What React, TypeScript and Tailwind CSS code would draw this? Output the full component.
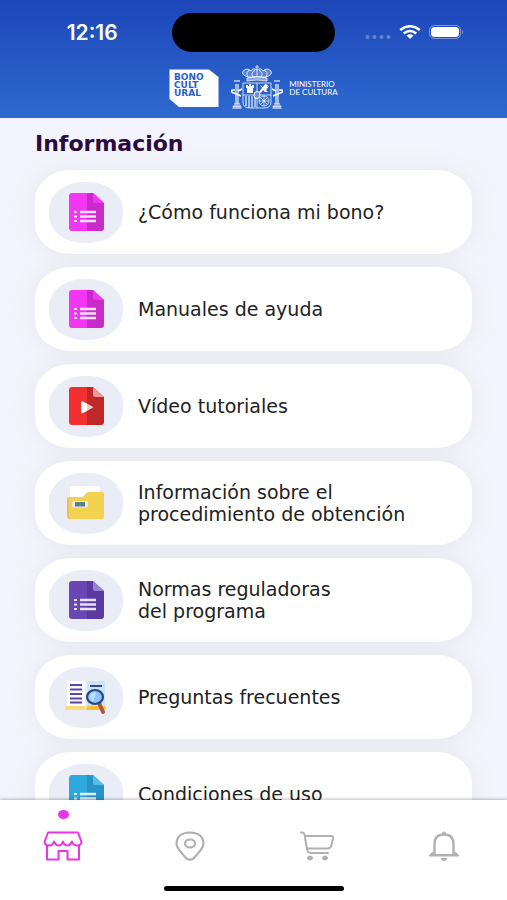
import type { ReactNode } from 'react';
import { clsx } from 'clsx';

interface DocColors {
    light: string;
    dark: string;
    fold: string;
}

const DocIcon = ({ colors, video }: { colors: DocColors; video?: boolean }) => (
    <svg viewBox="-1 0 36 38" className="h-[38px] w-9" aria-hidden="true">
        <path d="M3 0H18V38H3Q0 38 0 35V3Q0 0 3 0Z" fill={colors.light} />
        <path d="M18 0H24L35 10V35Q35 38 32 38H18Z" fill={colors.dark} />
        <path d="M24 0L35 10H26Q24 10 24 8Z" fill={colors.fold} />
        {video ? (
            <>
                <path d="M12 16Q12 13.500 14 14.500L18 16.500V24L14 26Q12 27 12 24.500Z" fill="#fff" />
                <path d="M18 16.500L24.500 20.200L18 24Z" fill="#f3c9c9" />
            </>
        ) : (
            <g fill="#fff" fillOpacity="0.850">
                <path d="M5 18h3v2H5zM5 22.500h3v2H5zM5 27h3v2H5z" />
                <path d="M11 17.800h16v2.400H11zM11 22.300h16v2.400H11zM11 26.800h16v2.400H11z" />
            </g>
        )}
    </svg>
);

const FolderIcon = () => (
    <svg viewBox="0 0 38 36" className="h-9 w-[38px]" aria-hidden="true">
        <path d="M3 3Q3 1 5 1H31Q33 1 33 3V18H3Z" fill="#fff" />
        <path d="M3 12H16L21 7H34Q37 7 37 10V31Q37 34 34 34H3Q0 34 0 31V15Q0 12 3 12Z" fill="#f0b95a" />
        <path d="M4 12H16L21 7H34Q37 7 37 10V31Q37 34 34 34H4Q2 34 2 31V15Q2 12 4 12Z" fill="#f3d250" />
        <rect x="5" y="16" width="16" height="6.500" rx="2" fill="#e9edf0" />
        <rect x="8" y="17" width="10" height="4.500" fill="#607f8b" />
    </svg>
);

const BookSearchIcon = () => (
    <svg viewBox="0 0 42 36" className="h-9 w-[42px]" aria-hidden="true">
        <path d="M2 2H18Q20 2 20 4V28H2Z" fill="#fafbff" />
        <path d="M24 2H40V28H22V4Q22 2 24 2Z" fill="#c5e7fb" />
        <path d="M1 27H20V31H0Z" fill="#fddc76" />
        <path d="M22 27H40L41 31H21Z" fill="#fbc032" />
        <path d="M5 6h12M5 10.500h12M5 15h12M5 19.500h12M5 23.500h12" stroke="#5947a5" strokeWidth="2" />
        <path d="M25 7h12" stroke="#3c4685" strokeWidth="2" />
        <path d="M34 24L38 33" stroke="#a85a44" strokeWidth="4" strokeLinecap="round" />
        <ellipse cx="30" cy="18" rx="8" ry="7" fill="#8fc6fb" stroke="#33437f" strokeWidth="2.200" />
        <path d="M25 17Q26 13 31 13L28 23Q25 21 25 17Z" fill="#b9dffd" />
    </svg>
);

const items: { lines: string[]; icon: ReactNode }[] = [
    {
        lines: ['¿Cómo funciona mi bono?'],
        icon: <DocIcon colors={{ light: '#f436f4', dark: '#c92bc9', fold: '#f436f4' }} />,
    },
    {
        lines: ['Manuales de ayuda'],
        icon: <DocIcon colors={{ light: '#f436f4', dark: '#c92bc9', fold: '#f436f4' }} />,
    },
    {
        lines: ['Vídeo tutoriales'],
        icon: <DocIcon video colors={{ light: '#f23030', dark: '#c02828', fold: '#f09a9a' }} />,
    },
    {
        lines: ['Información sobre el', 'procedimiento de obtención'],
        icon: <FolderIcon />,
    },
    {
        lines: ['Normas reguladoras', 'del programa'],
        icon: <DocIcon colors={{ light: '#6a46b4', dark: '#5a3aa2', fold: '#9a80d0' }} />,
    },
    {
        lines: ['Preguntas frecuentes'],
        icon: <BookSearchIcon />,
    },
    {
        lines: ['Condiciones de uso'],
        icon: <DocIcon colors={{ light: '#2fa8dc', dark: '#2594c6', fold: '#5bbbe4' }} />,
    },
];

const StatusBar = () => (
    <div className="grid grid-cols-[1fr_32%_1fr] items-center">
        <span className="pl-3 text-center font-[Inter,sans-serif] text-[21px] font-semibold leading-6">12:16</span>
        <div className="h-[39px] rounded-full bg-black" />
        <div className="flex items-center justify-center gap-2 pb-0.5 pr-3">
            <svg viewBox="0 0 26 14" className="h-3.5 w-[26px]" fill="#fff" fillOpacity="0.300" aria-hidden="true">
                <circle cx="2.500" cy="12" r="2" />
                <circle cx="9.500" cy="12" r="2" />
                <circle cx="16.500" cy="12" r="2" />
                <circle cx="23.500" cy="12" r="2" />
            </svg>
            <svg viewBox="0 0 22 14" className="h-3.5 w-[22px]" fill="none" stroke="#fff" strokeWidth="2.600" aria-hidden="true">
                <path d="M1.200 5Q11 -2.500 20.800 5" />
                <path d="M4.700 8.500Q11 3.500 17.300 8.500" />
                <path d="M7.500 10.500Q11 7.800 14.500 10.500L11 14Z" fill="#fff" stroke="none" />
            </svg>
            <svg viewBox="0 0 36 14" className="h-3.5 w-9" aria-hidden="true">
                <rect x="0.500" y="0.500" width="31" height="13" rx="4.500" fill="none" stroke="#fff" strokeOpacity="0.400" />
                <rect x="2" y="2" width="28" height="10" rx="3.500" fill="#fff" />
                <path d="M33 5Q35 7 33 9Z" fill="#fff" fillOpacity="0.500" />
            </svg>
        </div>
    </div>
);

const BonoLogo = () => (
    <svg viewBox="0 0 50 38" className="h-[38px] w-[50px]" role="img" aria-label="Bono Cultural">
        <path d="M0.500 0.500H40L49.500 8V38H10L0.500 30Z" fill="#fff" />
        <g fill="#2a5fc8" fontFamily="DejaVu Sans, sans-serif" fontWeight="700" fontSize="9">
            <text x="5" y="11">BONO</text>
            <text x="5" y="19">CULT</text>
            <text x="5" y="27">URAL</text>
        </g>
    </svg>
);

const Pillar = () => (
    <>
        <path d="M3 15h6v2H3zM4 19h4v20H4zM1.500 41h9v3h-9z" fill="#fff" fillOpacity="0.550" />
        <path d="M3 39h6M2 41h8" stroke="#fff" />
        <path d="M1 25Q0 28 3 28L10 31M0.500 25H4M7 26L11 24" fill="none" stroke="#fff" strokeWidth="1.600" />
    </>
);

const SpainArms = () => (
    <svg viewBox="0 0 52 45" className="h-[45px] w-[52px]" aria-hidden="true">
        <Pillar />
        <g transform="translate(52 0) scale(-1 1)">
            <Pillar />
        </g>
        <g fill="none" stroke="#fff" strokeOpacity="0.750">
            <path d="M26 0V5M24 2H28" strokeWidth="1.200" />
            <path d="M17 12Q10 10 12 6Q16 2 20 6Q22 2 26 5Q30 2 32 6Q36 2 40 6Q42 10 35 12Z" fill="#fff" fillOpacity="0.250" />
            <path d="M17 12Q14 7 19 5M22 12Q19 8 24 5M35 12Q38 7 33 5M30 12Q33 8 28 5M26 5V12" />
            <path d="M16 13Q26 10 36 13V16Q26 14 16 16Z" fill="#fff" fillOpacity="0.450" />
            <path d="M12 18H40V37Q40 43 33 43H19Q12 43 12 37ZM26 18V43M12 30H40" />
            <path d="M15 31V41M18 31V43M21 31V43M24 31V42" strokeWidth="1.500" />
            <circle cx="33" cy="36" r="5" />
            <path d="M28 36H38M33 31V41M29.500 32.500L36.500 39.500M29.500 39.500L36.500 32.500" />
        </g>
        <path d="M16 28V23H15V20H17V21H18V19H20V21H21V20H23V23H22V28Z" fill="#fff" />
        <path d="M29 20L32 22L34 19L37 20L36 22L38 21L35 25L37 27L34 27L32 25L30 28L28 27L31 23Z" fill="#fff" />
        <ellipse cx="26" cy="30" rx="3" ry="3.500" fill="#6f94df" stroke="#fff" />
    </svg>
);

const StoreIcon = () => (
    <svg viewBox="0 0 40 30" className="h-[30px] w-10" fill="none" stroke="currentColor" strokeWidth="2" strokeLinejoin="round" aria-hidden="true">
        <path d="M5 1.500H35L38.500 11Q38 14.500 34 14.500Q30 14.500 29 10.500Q27 14.500 24.500 14.500Q21 14.500 20 10.500Q19 14.500 15.500 14.500Q13 14.500 11 10.500Q10 14.500 6 14.500Q2 14.500 1.500 11Z" />
        <path d="M4 14V28.500H15.500V20H24.500V28.500H36V14" />
    </svg>
);

const PinIcon = () => (
    <svg viewBox="0 0 30 30" className="size-[30px]" fill="none" stroke="currentColor" strokeWidth="2.200" aria-hidden="true">
        <path d="M15 1.500Q28.500 2 28.500 13Q28.500 17 18.500 27.500Q15 30 11.500 27.500Q1.500 17 1.500 13Q1.500 2 15 1.500Z" />
        <ellipse cx="15" cy="12.500" rx="5" ry="4" />
    </svg>
);

const CartIcon = () => (
    <svg viewBox="0 0 34 30" className="h-[30px] w-[34px]" fill="none" stroke="currentColor" strokeWidth="2" strokeLinecap="round" strokeLinejoin="round" aria-hidden="true">
        <path d="M1 1.500H2.500Q4 1.500 4.500 3.500L7 18Q7.500 22 11 22H28" />
        <path d="M5 5H31Q33.500 5 33 7.500L31.500 14Q30.800 17.500 27 17.500H7" />
        <ellipse cx="10" cy="27" rx="2.500" ry="2" fill="currentColor" strokeWidth="1" />
        <ellipse cx="25" cy="27" rx="2.500" ry="2" fill="currentColor" strokeWidth="1" />
    </svg>
);

const BellIcon = () => (
    <svg viewBox="0 0 30 30" className="size-[30px]" fill="none" stroke="currentColor" strokeWidth="2.400" strokeLinejoin="round" aria-hidden="true">
        <path d="M5.500 23V13Q5.500 3.500 15 3.500Q24.500 3.500 24.500 13V23" />
        <circle cx="15" cy="2.500" r="2" fill="currentColor" stroke="none" />
        <path d="M4.500 20L0 24V25.500H30V24L25.500 20V23H4.500Z" fill="currentColor" stroke="none" />
        <path d="M11.500 27H18.500Q17.500 30 15 30Q12.500 30 11.500 27Z" fill="currentColor" stroke="none" />
    </svg>
);

const tabs = [
    { label: 'Inicio', icon: <StoreIcon />, active: true },
    { label: 'Mapa', icon: <PinIcon />, active: false },
    { label: 'Carrito', icon: <CartIcon />, active: false },
    { label: 'Avisos', icon: <BellIcon />, active: false },
];

export default function App() {
    return (
        <div className="flex h-screen flex-col overflow-hidden bg-[#f3f4fd] font-['DejaVu_Sans',sans-serif] text-[#222222]">
            <header className="shrink-0 bg-linear-to-b from-[#1d46b9] to-[#2f69cf] pb-2 pt-[13px] text-white">
                <StatusBar />
                <div className="mt-[13px] flex items-center justify-center gap-3">
                    <BonoLogo />
                    <div className="flex items-center gap-1.5">
                        <SpainArms />
                        <p className="font-[Lato,sans-serif] text-[8px] leading-[8px]">
                            MINISTERIO
                            <br />
                            DE CULTURA
                        </p>
                    </div>
                </div>
            </header>

            <main className="min-h-0 flex-1 overflow-hidden px-[35px] pt-[14px]">
                <h1 className="text-[22px] font-bold leading-6 text-[#2b0b3f]">Información</h1>
                <ul className="mt-[14px] flex flex-col gap-[13px]">
                    {items.map((item) => (
                        <li key={item.lines[0]}>
                            <button
                                type="button"
                                className="flex h-[84px] w-full items-center gap-[15px] rounded-[36px/30px] bg-white px-[14px] text-left shadow-[0_0_24px_rgba(130,130,90,0.1)]"
                            >
                                <span className="flex h-[61px] w-[74px] shrink-0 items-center justify-center rounded-[34px/28px] bg-[#eaedf6]">
                                    {item.icon}
                                </span>
                                <span className="text-[19px] leading-[22px]">
                                    {item.lines.map((line) => (
                                        <span key={line} className="block">
                                            {line}
                                        </span>
                                    ))}
                                </span>
                            </button>
                        </li>
                    ))}
                </ul>
            </main>

            <footer className="z-10 shrink-0 bg-white pb-[9px] shadow-[0_-1px_3px_rgba(0,0,0,0.25)]">
                <nav className="grid grid-cols-4">
                    {tabs.map((tab) => (
                        <button
                            key={tab.label}
                            type="button"
                            aria-label={tab.label}
                            className={clsx(
                                'flex flex-col items-center gap-3 pb-[25px] pt-[10px]',
                                tab.active ? 'text-[#e935e6]' : 'text-[#b0b0b0]',
                            )}
                        >
                            <span className={clsx('h-[9px] w-[11px] rounded-[50%]', tab.active && 'bg-[#e935e6]')} />
                            {tab.icon}
                        </button>
                    ))}
                </nav>
                <div className="mx-auto h-[5px] w-[180px] rounded-full bg-black" />
            </footer>
        </div>
    );
}
